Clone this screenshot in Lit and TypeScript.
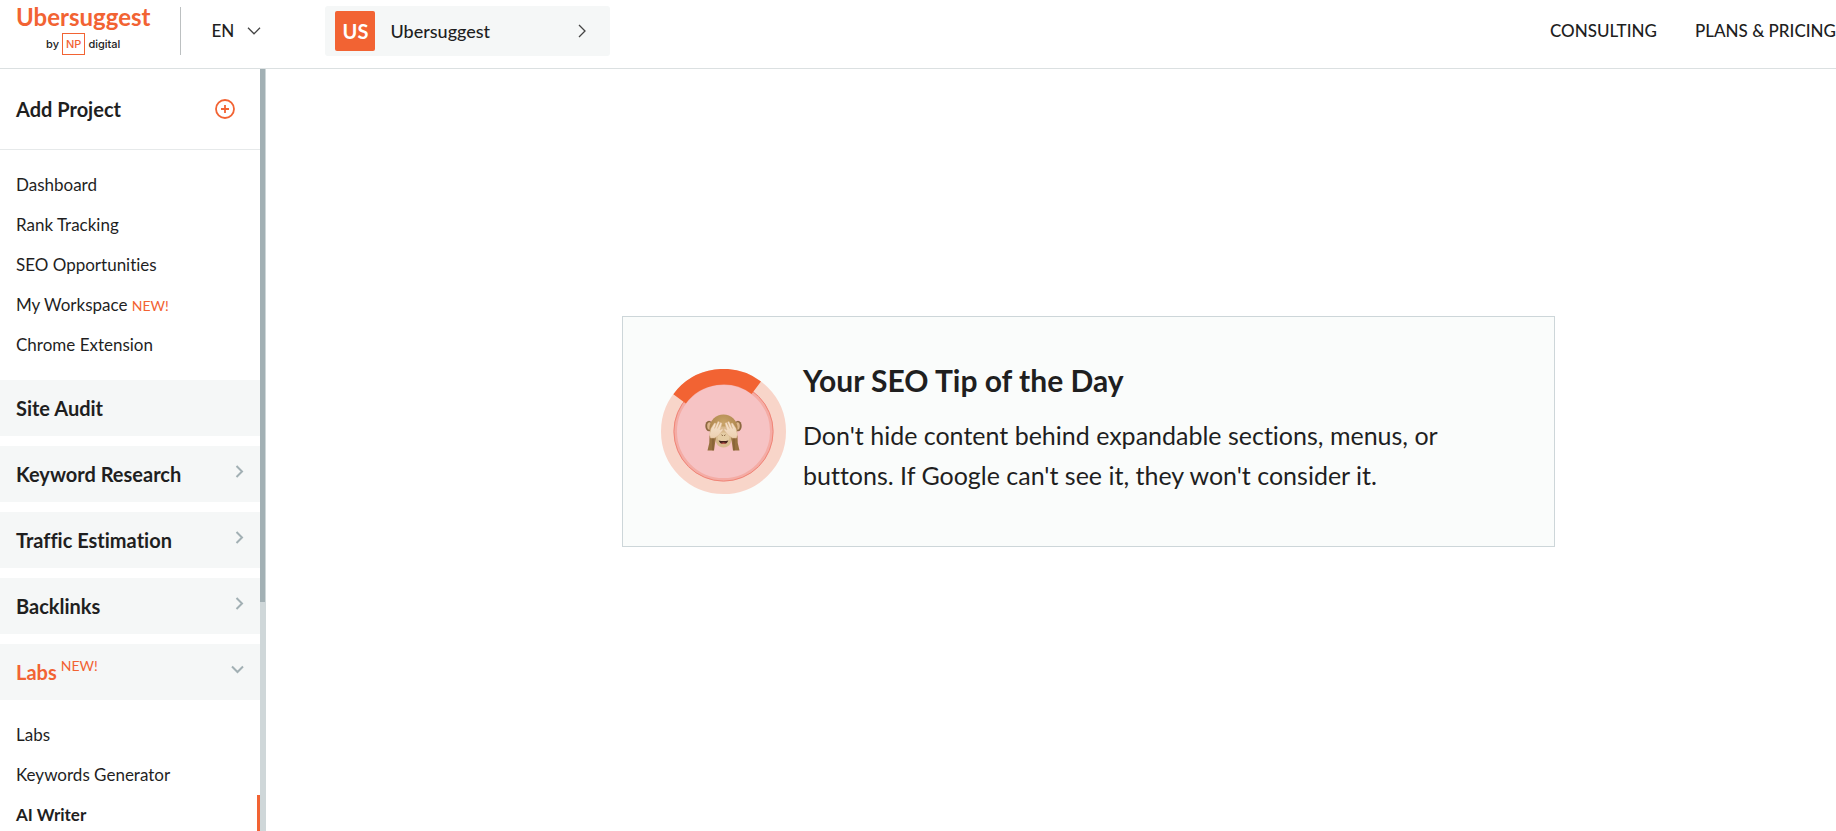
import { LitElement, html, css, nothing } from "lit";
import { customElement } from "lit/decorators.js";
import { classMap } from "lit/directives/class-map.js";

interface LinkItem {
  label: string;
  isNew?: boolean;
  active?: boolean;
}

interface Section {
  label: string;
  isNew?: boolean;
  open?: boolean;
  plain?: boolean;
}

const PROJECT_LINKS: LinkItem[] = [
  { label: "Dashboard" },
  { label: "Rank Tracking" },
  { label: "SEO Opportunities" },
  { label: "My Workspace", isNew: true },
  { label: "Chrome Extension" },
];

const SECTIONS: Section[] = [
  { label: "Site Audit", plain: true },
  { label: "Keyword Research" },
  { label: "Traffic Estimation" },
  { label: "Backlinks" },
  { label: "Labs", isNew: true, open: true },
];

const LABS_LINKS: LinkItem[] = [
  { label: "Labs" },
  { label: "Keywords Generator" },
  { label: "AI Writer", active: true },
];

@customElement("top-bar")
export class TopBar extends LitElement {
  static styles = css`
    :host {
      display: block;
      border-bottom: 1px solid #dbe0e1;
    }
    .bar {
      display: flex;
      align-items: center;
      min-height: 61px;
      padding: 0 0 7px 16px;
    }
    .logo {
      display: grid;
      justify-items: center;
      gap: 2px;
      padding-bottom: 4px;
      color: #f26333;
      text-decoration: none;
    }
    .name {
      font-size: 24px;
      line-height: 28px;
      font-weight: 700;
    }
    .by {
      display: flex;
      align-items: center;
      gap: 3px;
      font: 500 11px/20px Inter, sans-serif;
      color: #222;
    }
    .np {
      border: 1px solid #f26333;
      padding: 0 3px;
      color: #f26333;
    }
    .rule {
      width: 1px;
      height: 48px;
      margin: 0 30px;
      background: #bcc0c1;
    }
    .lang {
      display: flex;
      align-items: center;
      gap: 13px;
    }
    select {
      appearance: none;
      border: 0;
      margin: 0;
      padding: 0;
      background: none;
      color: #1f1f1f;
      font: 500 17px/24px Lato, sans-serif;
    }
    .project {
      display: flex;
      align-items: center;
      width: 285px;
      height: 50px;
      margin: 0 auto 0 64px;
      padding: 0 24px 0 10px;
      border: 0;
      border-radius: 3px;
      background: #f5f7f7;
      color: #1f1f1f;
      font: 500 18px/24px Lato, sans-serif;
    }
    .badge {
      width: 40px;
      margin-right: 15px;
      border-radius: 2px;
      background: #f26333;
      color: #fff;
      font-size: 20px;
      line-height: 40px;
      font-weight: 700;
      text-align: center;
    }
    .next {
      margin-left: auto;
    }
    nav {
      display: flex;
      gap: 38px;
    }
    nav a {
      color: #1f1f1f;
      font-size: 17px;
      line-height: 24px;
      font-weight: 500;
      text-decoration: none;
      white-space: nowrap;
    }
    svg {
      display: block;
      fill: none;
      stroke: #444;
      stroke-width: 1.3;
    }
  `;

  render() {
    return html`
      <header class="bar">
        <a class="logo" href="#">
          <span class="name">Ubersuggest</span>
          <span class="by">by <span class="np">NP</span> digital</span>
        </a>
        <div class="rule"></div>
        <div class="lang">
          <select aria-label="Language">
            <option>EN</option>
          </select>
          <svg width="14" height="8" viewBox="0 0 14 8"><path d="M1 .8l6 6 6-6" /></svg>
        </div>
        <button class="project" type="button">
          <span class="badge">US</span>
          <span>Ubersuggest</span>
          <svg class="next" width="8" height="14" viewBox="0 0 8 14"><path d="M1 1l6 6-6 6" /></svg>
        </button>
        <nav>
          <a href="#">CONSULTING</a>
          <a href="#">PLANS &amp; PRICING</a>
        </nav>
      </header>
    `;
  }
}

@customElement("side-menu")
export class SideMenu extends LitElement {
  static styles = css`
    :host {
      display: grid;
      grid-template-columns: 260px 6px;
      min-height: 0;
      overflow: hidden;
    }
    .content {
      min-height: 0;
      overflow: hidden;
    }
    .add {
      display: flex;
      align-items: center;
      justify-content: space-between;
      box-sizing: border-box;
      width: 100%;
      height: 81px;
      padding: 0 25px 0 16px;
      border: 0;
      border-bottom: 1px solid #e6e9ea;
      background: none;
      color: #1f1f1f;
      font: 700 20px/24px Lato, sans-serif;
    }
    ul {
      margin: 0;
      padding: 15px 0;
      list-style: none;
    }
    li a {
      display: block;
      padding: 0 16px;
      color: #1f1f1f;
      font-size: 17px;
      line-height: 40px;
      text-decoration: none;
    }
    li a.active {
      border-right: 3px solid #f26333;
      font-weight: 700;
    }
    .new {
      color: #f26333;
      font-size: 14px;
      line-height: 20px;
      font-weight: 400;
    }
    .sections {
      display: grid;
      gap: 10px;
    }
    .section {
      display: flex;
      align-items: center;
      width: 100%;
      height: 56px;
      padding: 0 16px;
      border: 0;
      background: #f5f7f7;
      color: #1f1f1f;
      font: 700 20px/24px Lato, sans-serif;
      font-variant-ligatures: none;
    }
    .section.open {
      color: #f26333;
    }
    .section .new {
      margin: 0 0 12px 4px;
    }
    .arrow {
      margin: 0 0 5px auto;
      fill: none;
      stroke: #a2b0b4;
      stroke-width: 2;
    }
    .track {
      background: #cfd7d9;
    }
    .thumb {
      height: 70%;
      border-right: 1px solid #cfd7d9;
      background: #a2b0b4;
    }
  `;

  private links(items: LinkItem[]) {
    return html`<ul>
      ${items.map(
        (item) => html`<li>
          <a href="#" class=${classMap({ active: !!item.active })}
            >${item.label}${item.isNew ? html` <span class="new">NEW!</span>` : nothing}</a
          >
        </li>`
      )}
    </ul>`;
  }

  private arrow(section: Section) {
    if (section.plain) return nothing;
    return section.open
      ? html`<svg class="arrow" width="13" height="9" viewBox="0 0 13 9"><path d="M1 1.5l5.5 5.5 5.5-5.5" /></svg>`
      : html`<svg class="arrow" width="9" height="13" viewBox="0 0 9 13"><path d="M1.5 1l5.5 5.5-5.5 5.5" /></svg>`;
  }

  render() {
    return html`
      <aside class="content">
        <button class="add" type="button">
          Add Project
          <svg width="20" height="20" viewBox="0 0 20 20" fill="none" stroke="#f26333" stroke-width="1.8">
            <circle cx="10" cy="10" r="9" />
            <path d="M10 6v8M6 10h8" />
          </svg>
        </button>
        ${this.links(PROJECT_LINKS)}
        <div class="sections">
          ${SECTIONS.map(
            (section) => html`<button type="button" class=${classMap({ section: true, open: !!section.open })}>
              <span>${section.label}</span>
              ${section.isNew ? html`<span class="new">NEW!</span>` : nothing} ${this.arrow(section)}
            </button>`
          )}
        </div>
        ${this.links(LABS_LINKS)}
      </aside>
      <div class="track"><div class="thumb"></div></div>
    `;
  }
}

@customElement("seo-tip")
export class SeoTip extends LitElement {
  static styles = css`
    :host {
      display: flex;
      align-items: center;
      gap: 17px;
      box-sizing: border-box;
      width: 100%;
      max-width: 933px;
      padding: 45px 38px;
      border: 1px solid #cdd6d9;
      background: #fafcfb;
    }
    .spinner {
      flex: none;
    }
    .text {
      padding-bottom: 6px;
    }
    h1 {
      margin: 0 0 17px;
      font-size: 30px;
      line-height: 36px;
      font-weight: 700;
    }
    p {
      max-width: 680px;
      margin: 0;
      font-size: 25px;
      line-height: 40px;
      font-variant-ligatures: none;
    }
  `;

  render() {
    return html`
      <svg class="spinner" width="125" height="125" viewBox="-62.5 -62.5 125 125">
        <circle r="54.7" fill="none" stroke="#f8d5c9" stroke-width="15.6" />
        <circle r="50" fill="#f6c3c4" />
        <circle r="48" fill="none" stroke="#f4aca5" stroke-width="3" />
        <circle r="49.6" fill="none" stroke="#f08575" stroke-width="1" />
        <path d="M-43.9 -32.7A54.7 54.7 0 0 1 32.8 -43.8" fill="none" stroke="#f26333" stroke-width="15.6" />
        <defs>
          <radialGradient id="fur" cx=".5" cy=".3" r=".7">
            <stop offset="0" stop-color="#c9a468" />
            <stop offset=".7" stop-color="#b08850" />
            <stop offset="1" stop-color="#8f6a3c" />
          </radialGradient>
          <linearGradient id="hand" x1="0" y1="0" x2="0" y2="1">
            <stop offset="0" stop-color="#f6e4cf" />
            <stop offset="1" stop-color="#ecd0b0" />
          </linearGradient>
        </defs>
        <ellipse cx="-14.5" cy="-5.5" rx="3.7" ry="5.2" fill="#8c6840" />
        <ellipse cx="-14" cy="-5.5" rx="2.3" ry="3.7" fill="#ddb58c" />
        <ellipse cx="14.5" cy="-5.5" rx="3.7" ry="5.2" fill="#8c6840" />
        <ellipse cx="14" cy="-5.5" rx="2.3" ry="3.7" fill="#ddb58c" />
        <ellipse cx="0" cy="-3" rx="14" ry="14" fill="url(#fur)" />
        <path d="M-9 1Q-9 16 0 16T9 1L6-5H-6Z" fill="#d7b98d" />
        <ellipse cx="0" cy="6" rx="6" ry="5" fill="#e5cca4" />
        <path d="M-1.8 3.2l1 1.2M1.8 3.2l-1 1.2" stroke="#7c5a38" stroke-width="1" />
        <path d="M-4.8 9Q0 10.2 4.8 9Q3.5 12.6 0 12.6T-4.8 9Z" fill="#43201b" />
        <path d="M-2.8 11.6Q0 10.6 2.8 11.6Q0 13.4-2.8 11.6Z" fill="#c25a50" />
        <path d="M-14 4L-7.500 5-9.500 19H-16Q-13.500 12-14 4Z" fill="#96703f" />
        <path d="M14 4L7.500 5 9.500 19H16Q13.500 12 14 4Z" fill="#96703f" />
        <path d="M-10.500 6V19M10.500 6V19" stroke="#7a5730" stroke-width=".8" />
        <path
          d="M-14 3L-12.500-3-9-8.500-7.500-8-9-3-5.500-10-4-9.500-6.200-3-3-9-1.500-8.300-3.500-1.500-1-3-.5-1.500-5 4-9 6.500-13 6.500Z"
          fill="url(#hand)" stroke="#dcb992" stroke-width=".5" stroke-linejoin="round" />
        <path
          d="M14 3L12.500-3 9-8.500 7.500-8 9-3 5.500-10 4-9.500 6.200-3 3-9 1.500-8.300 3.500-1.500 1-3 .5-1.500 5 4 9 6.500 13 6.500Z"
          fill="url(#hand)" stroke="#dcb992" stroke-width=".5" stroke-linejoin="round" />
      </svg>
      <div class="text">
        <h1>Your SEO Tip of the Day</h1>
        <p>Don't hide content behind expandable sections, menus, or buttons. If Google can't see it, they won't consider it.</p>
      </div>
    `;
  }
}

@customElement("app-root")
export class AppRoot extends LitElement {
  static styles = css`
    :host {
      display: grid;
      grid-template-rows: auto minmax(0, 1fr);
      height: 100vh;
      overflow: hidden;
      background: #fff;
      color: #1f1f1f;
      font-family: Lato, sans-serif;
      font-variant-ligatures: none;
    }
    .body {
      display: grid;
      grid-template-columns: auto minmax(0, 1fr);
      grid-template-rows: minmax(0, 1fr);
      min-height: 0;
    }
    main {
      display: grid;
      place-items: center;
      padding: 0 0 37px 75px;
    }
  `;

  render() {
    return html`
      <top-bar></top-bar>
      <div class="body">
        <side-menu></side-menu>
        <main><seo-tip></seo-tip></main>
      </div>
    `;
  }
}
